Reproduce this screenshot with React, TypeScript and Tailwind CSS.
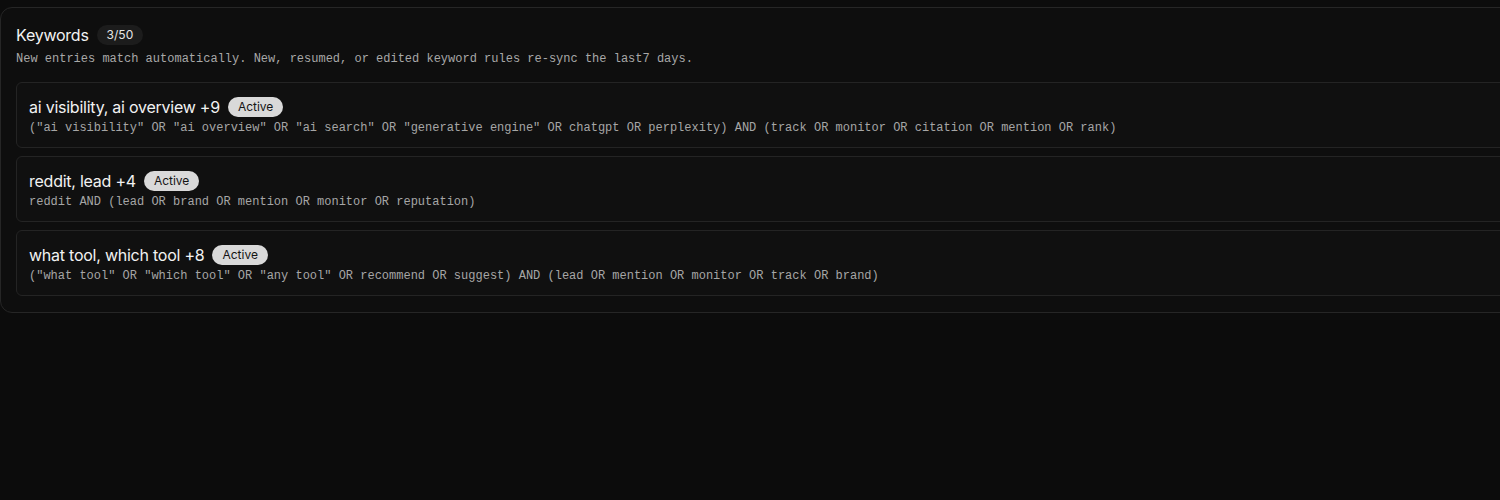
const rules = [
  {
    title: "ai visibility, ai overview +9",
    query:
      '("ai visibility" OR "ai overview" OR "ai search" OR "generative engine" OR chatgpt OR perplexity) AND (track OR monitor OR citation OR mention OR rank)',
  },
  {
    title: "reddit, lead +4",
    query: "reddit AND (lead OR brand OR mention OR monitor OR reputation)",
  },
  {
    title: "what tool, which tool +8",
    query:
      '("what tool" OR "which tool" OR "any tool" OR recommend OR suggest) AND (lead OR mention OR monitor OR track OR brand)',
  },
]

const mono = "font-['Liberation_Mono',monospace]"

export default function App() {
  return (
    <div className="min-h-[500px] w-full overflow-hidden bg-[#0c0c0c] pt-[7px] font-['Inter',sans-serif]">
      <section className="w-[1530px] rounded-xl border border-[#262626] bg-[#0e0e0e] px-[15px] pt-[15px] pb-4">
        {/* header */}
        <div className="flex items-center gap-2">
          <h2 className="text-base leading-6 tracking-[-0.015em] text-[#f2f2f2]">Keywords</h2>
          <span className="rounded-full bg-[#1c1c1c] px-2.5 py-0.5 text-xs leading-4 text-[#e5e5e5]">
            3/50
          </span>
        </div>
        <p className={`mt-[4px] text-xs leading-4 text-[#a8a8a8] ${mono}`}>
          New entries match automatically. New, resumed, or edited keyword rules re-sync the last7 days.
        </p>

        {/* rules */}
        <div className="mt-[15px] flex flex-col gap-2">
          {rules.map((rule) => (
            <div
              key={rule.title}
              className="rounded-md border border-[#242424] bg-[#101010] px-3 pt-[12px] pb-[11px]"
            >
              <div className="flex items-center gap-2">
                <span className="text-base leading-6 tracking-[-0.015em] text-[#f2f2f2]">
                  {rule.title}
                </span>
                <span className="rounded-full bg-[#d9d9d9] px-2.5 py-0.5 text-xs leading-4 text-[#141414]">
                  Active
                </span>
              </div>
              <p className={`mt-px text-xs leading-4 text-[#a6a6a6] ${mono}`}>{rule.query}</p>
            </div>
          ))}
        </div>
      </section>
    </div>
  )
}
